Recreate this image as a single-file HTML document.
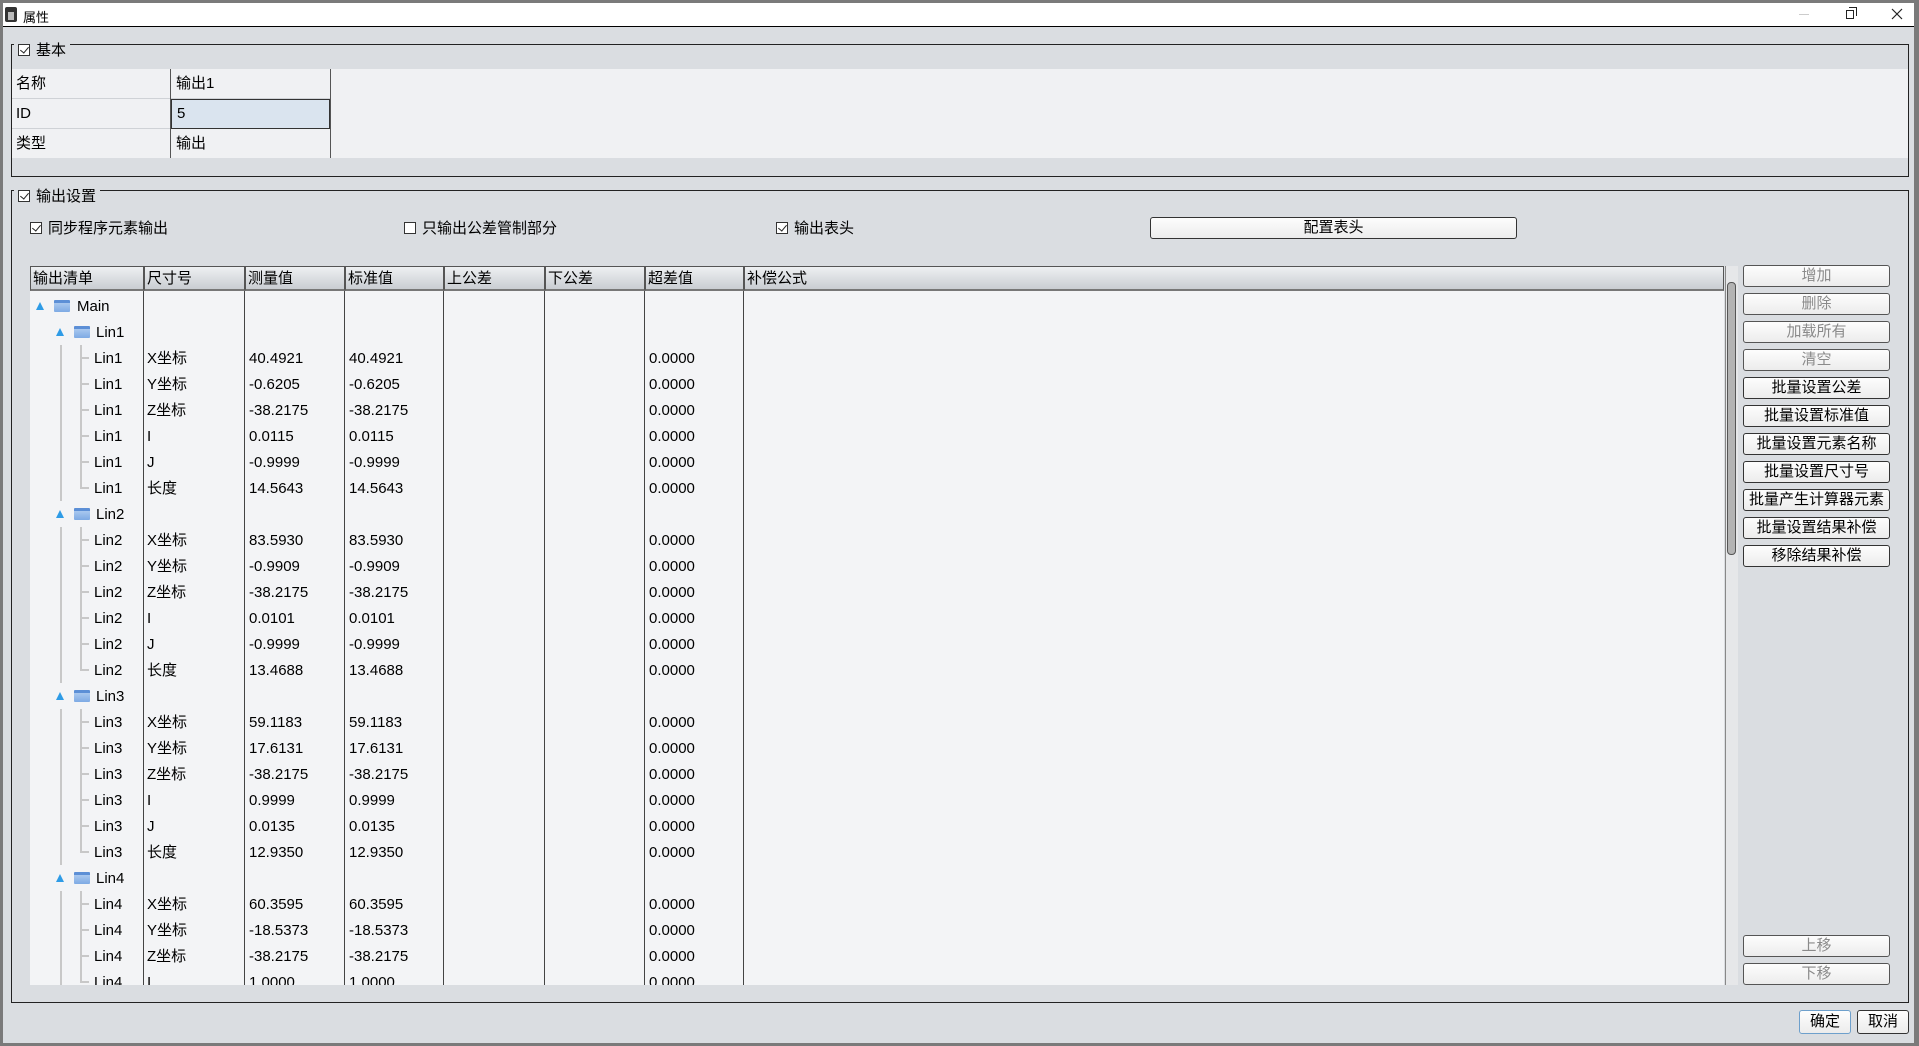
<!DOCTYPE html>
<html><head><meta charset="utf-8">
<style>
*{box-sizing:border-box;margin:0;padding:0}
body{width:1919px;height:1046px;overflow:hidden;background:#7a7a7a;font-family:"Liberation Sans","Noto Sans CJK SC",sans-serif;font-size:15px;color:#000;position:relative}
.a{position:absolute}
#win{left:3px;top:3px;width:1911px;height:1040px;background:#dadde1}
#title{left:3px;top:3px;width:1911px;height:24px;background:#fff;border-bottom:1px solid #000}
.grp{border:1px solid #222}
.lbl{background:#dadde1;padding:0 4px;font-size:15px;line-height:18px}
.cb{display:inline-block;width:12px;height:12px;border:1px solid #333;vertical-align:-1px;margin-right:6px;position:relative;background:#fff}
.cb.on::after{content:"";position:absolute;left:3px;top:0px;width:4px;height:7px;border-right:1.3px solid #222;border-bottom:1.3px solid #222;transform:rotate(40deg)}
.btn{border:1px solid #333;border-radius:3px;background:linear-gradient(#fdfdfd,#ececec);text-align:center;font-size:15px;line-height:20px}
.dis{color:#8a8a8a;border-color:#555}
.prow{height:30px;line-height:30px;border-bottom:1px solid #cfd2d6}
.hd{top:266px;height:25px;background:linear-gradient(#eef0f2,#c9cdd2);border:1px solid #555;border-bottom:2px solid #777;line-height:23px;padding-left:2px;font-size:15px}
.vl{width:1px;background:#444;top:291px;height:694px}
.cell{position:absolute;font-size:15px;line-height:20px}
</style></head><body>
<div id="win" class="a"></div>
<div id="title" class="a">
 <div class="a" style="left:2px;top:4px;width:12px;height:15px;background:#333;border-radius:2px"></div>
 <div class="a" style="left:5px;top:9px;width:6px;height:8px;background:#bbb"></div>
 <div class="a" style="left:20px;top:4px;font-size:13px">属性</div>
 <div class="a" style="left:1796px;top:11px;width:10px;height:1px;background:#ccc"></div>
 <div class="a" style="left:1843px;top:7px;width:8px;height:9px;border:1px solid #222;background:#fff"></div>
 <div class="a" style="left:1846px;top:4px;width:8px;height:9px;border-top:1px solid #222;border-right:1px solid #222"></div>
 <svg class="a" style="left:1888px;top:5px" width="12" height="12"><path d="M1 1L11 11M11 1L1 11" stroke="#222" stroke-width="1.2"/></svg>
</div>

<div class="a grp" style="left:11px;top:44px;width:1898px;height:133px"></div>
<div class="a" style="left:12px;top:69px;width:1896px;height:89px;background:#f0f1f3"></div>
<div class="a lbl" style="left:14px;top:42px"><span class="cb on"></span>基本</div>
<div class="a" style="left:12px;top:69px;width:158px">
 <div class="prow" style="padding-left:4px">名称</div><div class="prow" style="padding-left:4px">ID</div><div class="prow" style="padding-left:4px;border-bottom:none">类型</div>
</div>
<div class="a" style="left:170px;top:69px;width:161px;height:89px;border-left:1px solid #555;border-right:1px solid #555">
 <div class="prow" style="padding-left:5px">输出1</div>
 <div class="prow" style="padding-left:5px;background:#dae4ef;border:1px solid #333;line-height:28px">5</div>
 <div class="prow" style="padding-left:5px;border-bottom:none">输出</div>
</div>

<div class="a grp" style="left:11px;top:190px;width:1898px;height:813px"></div>
<div class="a lbl" style="left:14px;top:188px"><span class="cb on"></span>输出设置</div>
<div class="a" style="left:30px;top:219px;line-height:20px"><span class="cb on"></span>同步程序元素输出</div>
<div class="a" style="left:404px;top:219px;line-height:20px"><span class="cb"></span>只输出公差管制部分</div>
<div class="a" style="left:776px;top:219px;line-height:20px"><span class="cb on"></span>输出表头</div>
<div class="a btn" style="left:1150px;top:217px;width:367px;height:22px">配置表头</div>

<div class="a" style="left:30px;top:266px;width:1694px;height:719px;background:#f3f4f6;overflow:hidden" id="tb"></div>
<div class="a" style="left:1725px;top:266px;width:13px;height:719px;background:#e6e7e9;border-left:1px solid #888"></div>
<div class="a" style="left:1727px;top:282px;width:9px;height:273px;background:#b3b3b3;border:1px solid #555;border-radius:4px"></div>

<div id="btns"></div>
<div class="a btn dis" style="left:1743px;top:935px;width:147px;height:22px">上移</div>
<div class="a btn dis" style="left:1743px;top:963px;width:147px;height:22px">下移</div>
<div class="a btn" style="left:1799px;top:1010px;width:52px;height:24px;border-color:#6ea0cc;line-height:22px">确定</div>
<div class="a btn" style="left:1857px;top:1010px;width:52px;height:24px;line-height:22px">取消</div>

<script>
var tb=document.getElementById('tb');var h='';
var cols=[0,114,215,315,414,515,615,714];
var names=['输出清单','尺寸号','测量值','标准值','上公差','下公差','超差值','补偿公式'];
for(var i=0;i<8;i++){var w=(i<7?cols[i+1]:1694)-cols[i];h+='<div class="a hd" style="left:'+cols[i]+'px;top:0;width:'+w+'px">'+names[i]+'</div>';}
for(var i=1;i<8;i++)h+='<div class="a vl" style="left:'+(cols[i]-1)+'px;top:25px;height:694px"></div>';
var data={Lin1:['40.4921','-0.6205','-38.2175','0.0115','-0.9999','14.5643'],Lin2:['83.5930','-0.9909','-38.2175','0.0101','-0.9999','13.4688'],Lin3:['59.1183','17.6131','-38.2175','0.9999','0.0135','12.9350'],Lin4:['60.3595','-18.5373','-38.2175','1.0000']};
var dims=['X坐标','Y坐标','Z坐标','I','J','长度'];
function tri(x,y){return '<div class="a" style="left:'+x+'px;top:'+(y-4)+'px;width:0;height:0;border-left:4.5px solid transparent;border-right:4.5px solid transparent;border-bottom:8px solid #2e9be6"></div>';}
function fold(x,y){return '<div class="a" style="left:'+x+'px;top:'+(y-6)+'px;width:16px;height:12px;background:linear-gradient(#a9c8ef,#7eaae4);border-top:3px solid #5c8fd6;border-radius:1px"></div>';}
function row(n){return 40+26*n;}
var n=0;
h+=tri(6,row(0))+fold(24,row(0))+'<div class="cell" style="left:47px;top:'+(row(0)-9)+'px">Main</div>';
n=1;
['Lin1','Lin2','Lin3','Lin4'].forEach(function(L){
 var y=row(n);
 h+=tri(26,y)+fold(44,y)+'<div class="cell" style="left:66px;top:'+(y-9)+'px">'+L+'</div>';
 var d=data[L];var y0=row(n+1)-13;
 h+='<div class="a" style="left:30px;top:'+y0+'px;width:2px;height:'+(26*d.length)+'px;background:#c8c8c8"></div>';
 for(var k=0;k<d.length;k++){n++;y=row(n);
  h+='<div class="a" style="left:50px;top:'+(y-13)+'px;width:2px;height:'+(k==d.length-1?14:26)+'px;background:#c8c8c8"></div>';
  h+='<div class="a" style="left:52px;top:'+(y-1)+'px;width:7px;height:2px;background:#c8c8c8"></div>';
  h+='<div class="cell" style="left:64px;top:'+(y-9)+'px">'+L+'</div>';
  h+='<div class="cell" style="left:'+(cols[1]+3)+'px;top:'+(y-9)+'px">'+dims[k]+'</div>';
  h+='<div class="cell" style="left:'+(cols[2]+4)+'px;top:'+(y-9)+'px">'+d[k]+'</div>';
  h+='<div class="cell" style="left:'+(cols[3]+4)+'px;top:'+(y-9)+'px">'+d[k]+'</div>';
  h+='<div class="cell" style="left:'+(cols[6]+4)+'px;top:'+(y-9)+'px">0.0000</div>';
 }
 n++;
});
tb.innerHTML=h;
var b=[['增加',1],['删除',1],['加载所有',1],['清空',1],['批量设置公差'],['批量设置标准值'],['批量设置元素名称'],['批量设置尺寸号'],['批量产生计算器元素'],['批量设置结果补偿'],['移除结果补偿']];
var s='';b.forEach(function(x,i){s+='<div class="a btn'+(x[1]?' dis':'')+'" style="left:1743px;top:'+(265+28*i)+'px;width:147px;height:22px">'+x[0]+'</div>';});
document.getElementById('btns').innerHTML=s;
</script>
</body></html>
